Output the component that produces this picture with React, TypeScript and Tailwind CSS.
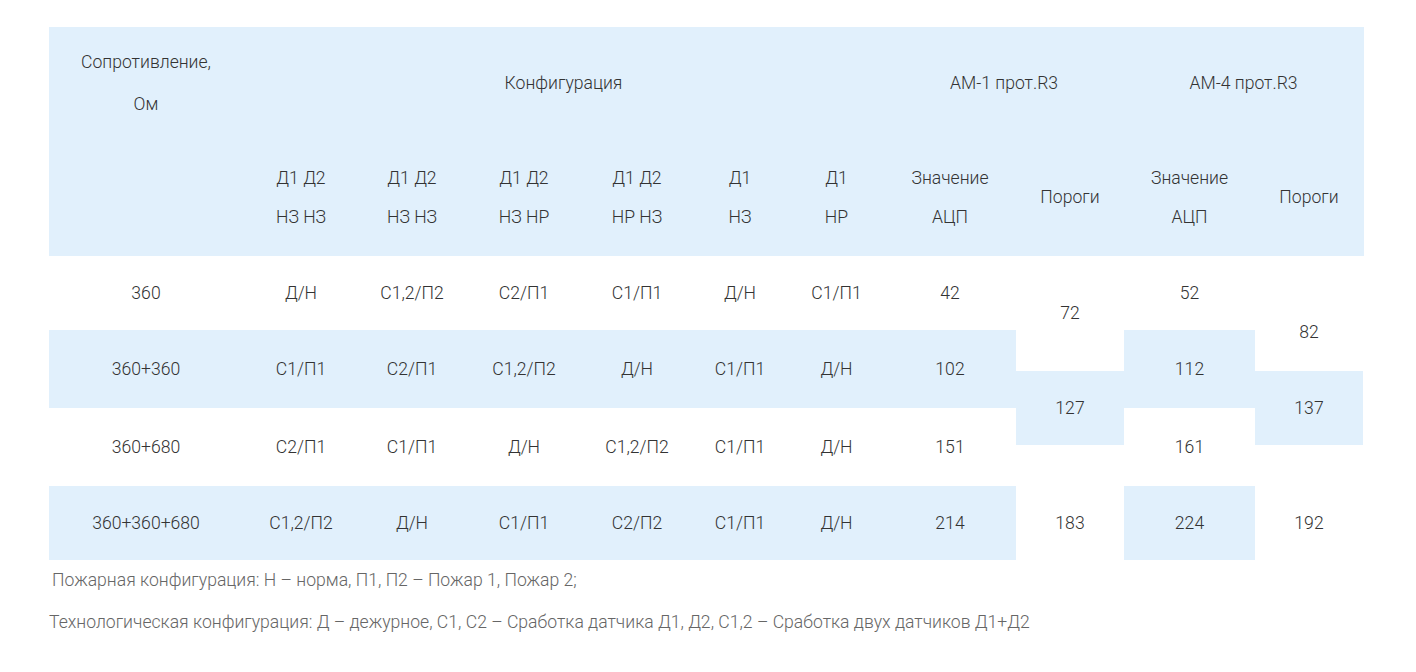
import React from 'react';

const colStart = [
  'col-start-1',
  'col-start-2',
  'col-start-3',
  'col-start-4',
  'col-start-5',
  'col-start-6',
  'col-start-7',
  'col-start-8',
];

const rows = [
  {
    place: 'row-start-1 row-span-2',
    bg: 'bg-white',
    cells: ['360', 'Д/Н', 'С1,2/П2', 'С2/П1', 'С1/П1', 'Д/Н', 'С1/П1', '42'],
  },
  {
    place: 'row-start-3 row-span-2',
    bg: 'bg-[#e1f0fc]',
    cells: ['360+360', 'С1/П1', 'С2/П1', 'С1,2/П2', 'Д/Н', 'С1/П1', 'Д/Н', '102'],
  },
  {
    place: 'row-start-5 row-span-2',
    bg: 'bg-white',
    cells: ['360+680', 'С2/П1', 'С1/П1', 'Д/Н', 'С1,2/П2', 'С1/П1', 'Д/Н', '151'],
  },
  {
    place: 'row-start-7 row-span-1',
    bg: 'bg-[#e1f0fc]',
    cells: ['360+360+680', 'С1,2/П2', 'Д/Н', 'С1/П1', 'С2/П2', 'С1/П1', 'Д/Н', '214'],
  },
];

// AM-1 / AM-4 columns don't line up with the rows, so they get their own spans
const extra = [
  { text: '72', cls: 'col-start-9 row-start-1 row-span-3 bg-white' },
  { text: '127', cls: 'col-start-9 row-start-4 row-span-2 bg-[#e1f0fc]' },
  { text: '183', cls: 'col-start-9 row-start-7 bg-white' },
  { text: '52', cls: 'col-start-10 row-start-1 row-span-2 bg-white' },
  { text: '112', cls: 'col-start-10 row-start-3 row-span-2 bg-[#e1f0fc]' },
  { text: '161', cls: 'col-start-10 row-start-5 row-span-2 bg-white' },
  { text: '224', cls: 'col-start-10 row-start-7 bg-[#e1f0fc]' },
  { text: '82', cls: 'col-start-11 row-start-2 row-span-2 bg-white' },
  { text: '137', cls: 'col-start-11 row-start-4 row-span-2 bg-[#e1f0fc]' },
  { text: '192', cls: 'col-start-11 row-start-7 bg-white' },
];

const cols =
  'grid-cols-[194px_116px_106px_118px_108px_98px_95px_132px_108px_131px_108px]';

const Cell: React.FC<{ className?: string; children?: React.ReactNode }> = ({
  className = '',
  children,
}) => (
  <div className={`flex flex-col items-center justify-center text-center ${className}`}>
    {children}
  </div>
);

const Two: React.FC<{ a: string; b: string }> = ({ a, b }) => (
  <Cell className="leading-[39px]">
    <span>{a}</span>
    <span>{b}</span>
  </Cell>
);

const App: React.FC = () => {
  return (
    <div
      className="min-h-screen bg-white pt-[27px] pl-[49px] text-[17.6px] font-light text-[#333]"
      style={{ fontFamily: 'Roboto, "Noto Sans", sans-serif' }}
    >
      <div className="w-[1315px]">
        {/* header */}
        <div className={`grid ${cols} grid-rows-[112px_117px] bg-[#e1f0fc]`}>
          <Cell className="leading-[42px]">
            <span>Сопротивление,</span>
            <span>Ом</span>
          </Cell>
          <Cell className="col-span-6">Конфигурация</Cell>
          <Cell className="col-span-2">АМ-1 прот.R3</Cell>
          <Cell className="col-span-2">АМ-4 прот.R3</Cell>

          <Cell />
          <Two a="Д1 Д2" b="НЗ НЗ" />
          <Two a="Д1 Д2" b="НЗ НЗ" />
          <Two a="Д1 Д2" b="НЗ НР" />
          <Two a="Д1 Д2" b="НР НЗ" />
          <Two a="Д1" b="НЗ" />
          <Two a="Д1" b="НР" />
          <Two a="Значение" b="АЦП" />
          <Cell>Пороги</Cell>
          <Two a="Значение" b="АЦП" />
          <Cell>Пороги</Cell>
        </div>

        {/* body */}
        <div
          className={`grid ${cols} grid-rows-[37px_37px_41px_37px_37px_41px_74px]`}
        >
          {rows.map((row, ri) =>
            row.cells.map((c, ci) => (
              <Cell key={`${ri}-${ci}`} className={`${colStart[ci]} ${row.place} ${row.bg}`}>
                {c}
              </Cell>
            ))
          )}
          {extra.map((e) => (
            <Cell key={e.text} className={e.cls}>
              {e.text}
            </Cell>
          ))}
        </div>
      </div>

      <div className="text-[#666]">
        <p className="pl-[3px] pt-[9px] leading-[22px]">
          Пожарная конфигурация: Н – норма, П1, П2 – Пожар 1, Пожар 2;
        </p>
        <p className="pt-[20px] leading-[22px]">
          Технологическая конфигурация: Д – дежурное, С1, С2 – Сработка датчика Д1, Д2, С1,2 – Сработка двух датчиков Д1+Д2
        </p>
      </div>
    </div>
  );
};

export default App;
